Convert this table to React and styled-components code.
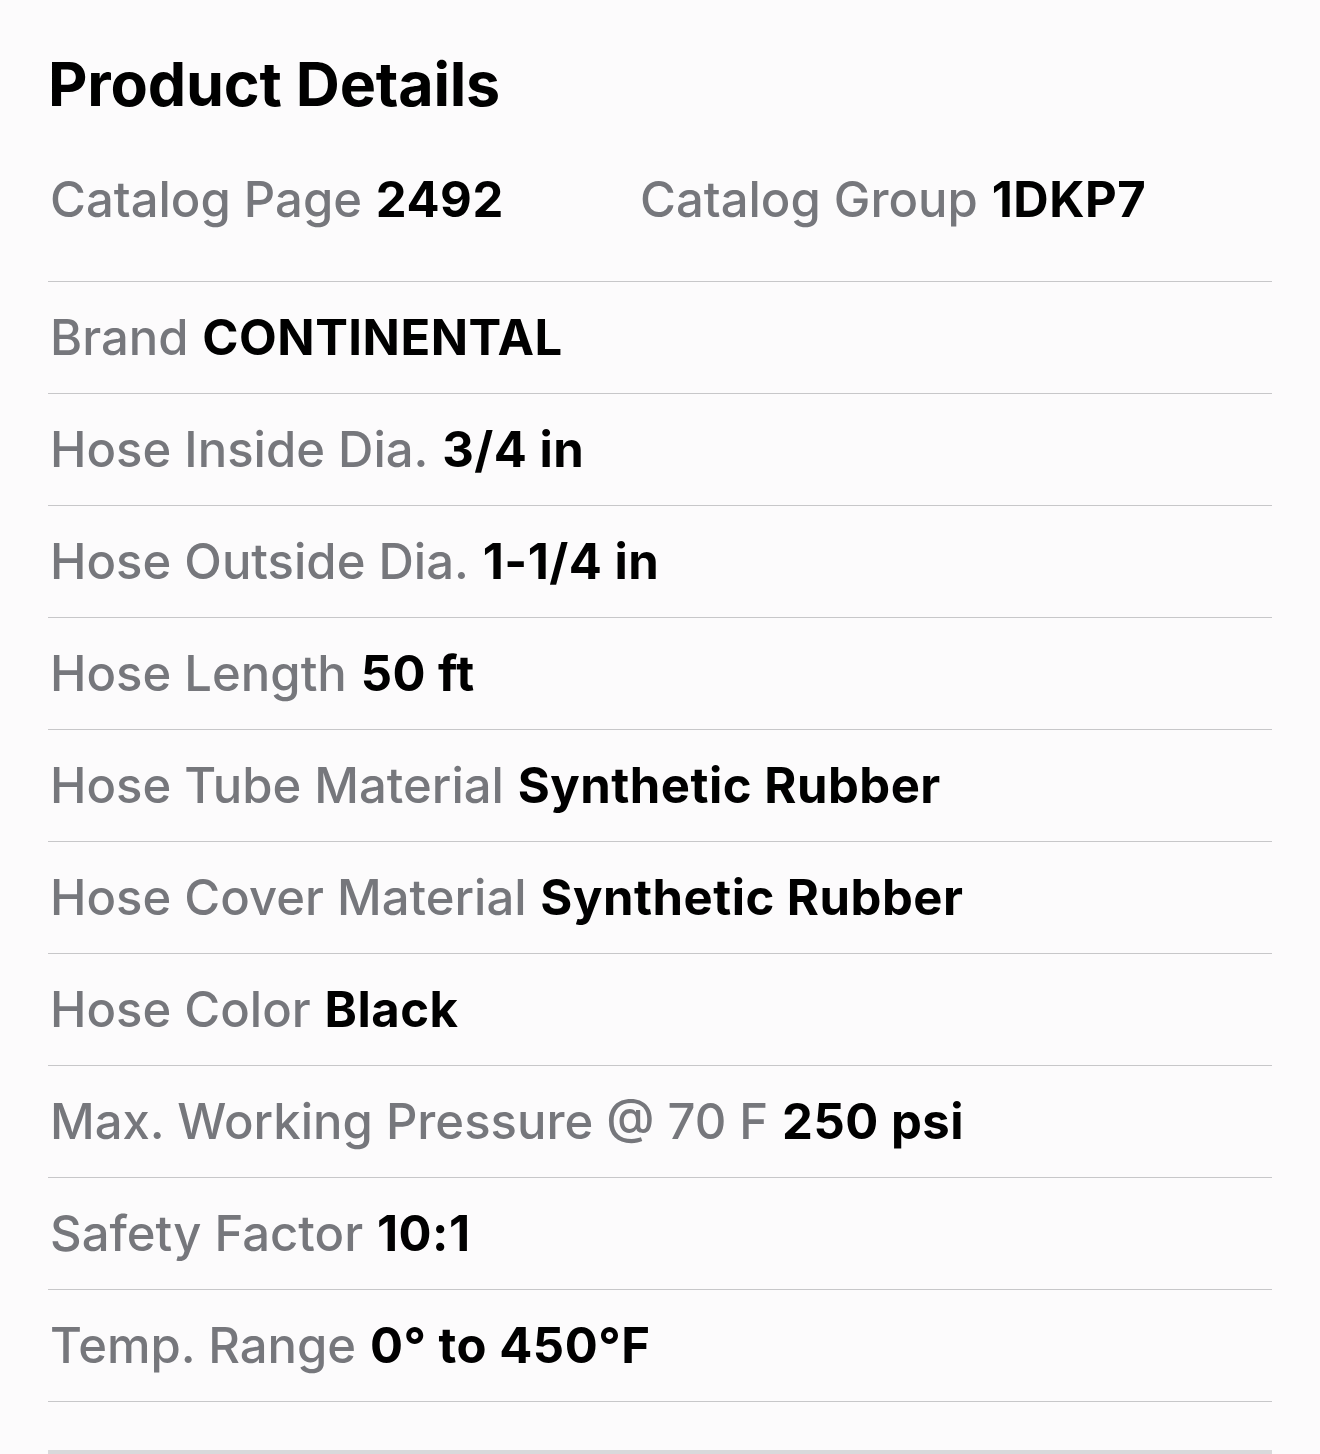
import styled, { createGlobalStyle } from "styled-components";

const GlobalStyle = createGlobalStyle`
  html, body {
    margin: 0;
    padding: 0;
    background: #fcfbfc;
  }
  body {
    font-family: Inter, "Noto Sans", sans-serif;
    -webkit-font-smoothing: antialiased;
  }
`;

const specs = [
  { label: "Brand", value: "CONTINENTAL" },
  { label: "Hose Inside Dia.", value: "3/4 in" },
  { label: "Hose Outside Dia.", value: "1-1/4 in" },
  { label: "Hose Length", value: "50 ft" },
  { label: "Hose Tube Material", value: "Synthetic Rubber" },
  { label: "Hose Cover Material", value: "Synthetic Rubber" },
  { label: "Hose Color", value: "Black" },
  { label: "Max. Working Pressure @ 70 F", value: "250 psi" },
  { label: "Safety Factor", value: "10:1" },
  { label: "Temp. Range", value: "0° to 450°F" },
];

const App = () => {
  return (
    <Page>
      <GlobalStyle />
      <Title>Product Details</Title>
      <CatalogRow>
        <Spec>
          <Label>Catalog Page</Label> <Value>2492</Value>
        </Spec>
        <Spec>
          <Label>Catalog Group</Label> <Value>1DKP7</Value>
        </Spec>
      </CatalogRow>
      <SpecList>
        {specs.map((s) => (
          <SpecRow key={s.label}>
            <Spec>
              <Label>{s.label}</Label> <Value>{s.value}</Value>
            </Spec>
          </SpecRow>
        ))}
      </SpecList>
      <BottomBar />
    </Page>
  );
};

export default App;

const Page = styled.div`
  padding: 0 48px;
  min-height: 1454px;
  box-sizing: border-box;
  background: #fcfbfc;
`;

const Title = styled.h1`
  margin: 0;
  padding-top: 24px;
  height: 120px;
  display: flex;
  align-items: center;
  font-size: 61px;
  font-weight: 700;
  letter-spacing: -0.2px;
  color: #000;
`;

const CatalogRow = styled.div`
  display: grid;
  grid-template-columns: 590px auto;
  align-items: center;
  height: 112px;
  margin-bottom: 25px;
`;

const SpecList = styled.div`
  border-bottom: 1px solid #c7c7c9;
`;

const SpecRow = styled.div`
  box-sizing: border-box;
  height: 112px;
  border-top: 1px solid #c7c7c9;
  display: flex;
  align-items: center;
`;

const Spec = styled.div`
  font-size: 49px;
  line-height: 60px;
  white-space: nowrap;
  padding-left: 2px;
`;

const Label = styled.span`
  color: #76777c;
  font-weight: 500;
`;

const Value = styled.span`
  color: #000;
  font-weight: 700;
  letter-spacing: 0.5px;
`;

const BottomBar = styled.div`
  margin-top: 48px;
  height: 6px;
  background: #d9d9db;
`;
